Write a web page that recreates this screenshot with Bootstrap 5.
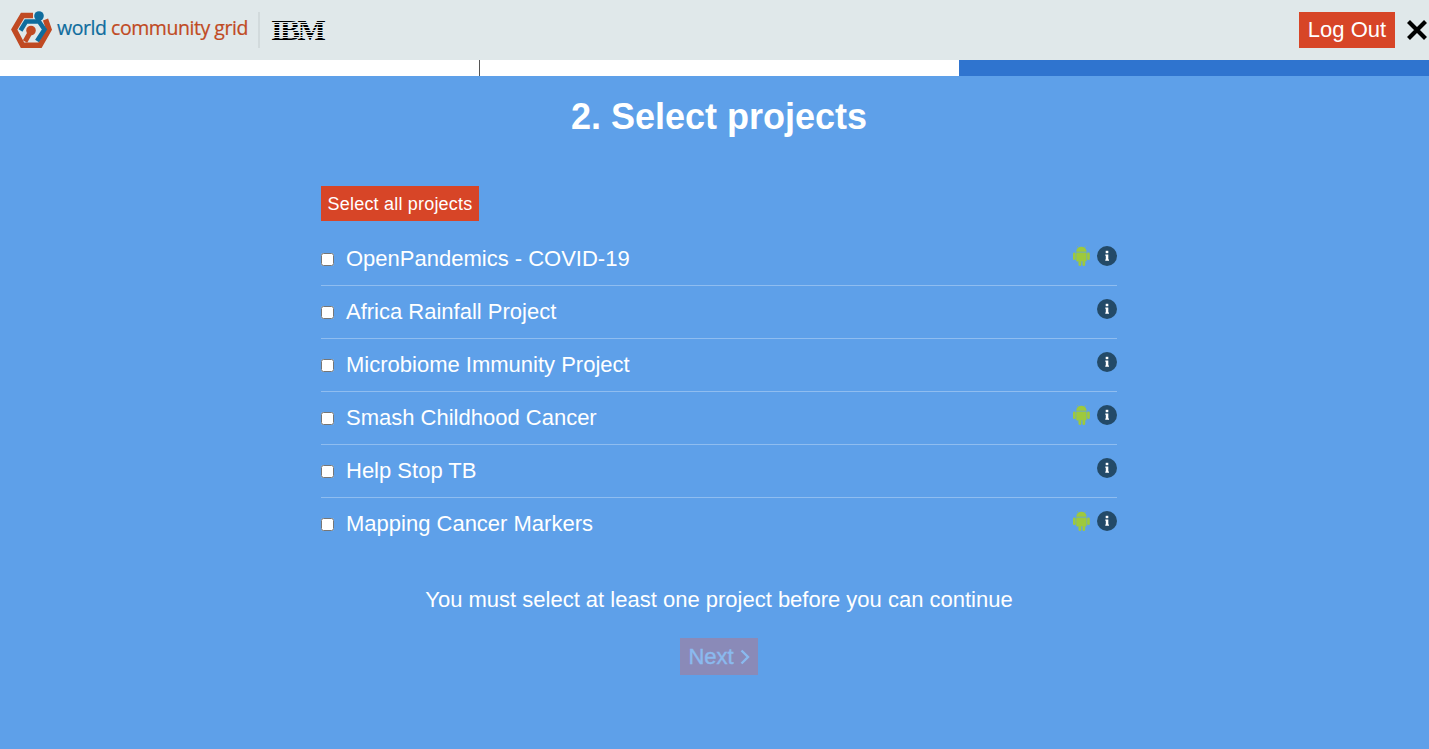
<!DOCTYPE html>
<html lang="en">
<head>
<meta charset="utf-8">
<title>Select projects</title>
<link href="https://cdn.jsdelivr.net/npm/bootstrap@5.3.0/dist/css/bootstrap.min.css" rel="stylesheet">
<style>
html,body{height:100%}
body{background:#5ea0e9;font-family:"Liberation Sans",Arial,sans-serif;color:#fff;overflow:hidden}
.top-strip{height:60px;background:#e0e8ea;padding:0 0 0 11px}
.brand-word{font-family:"Open Sans","Noto Sans",sans-serif;font-size:19.5px;line-height:1;margin:0 0 4px 4px;letter-spacing:-.45px;white-space:nowrap;color:#c04a23;-webkit-text-stroke:.2px}
.brand-word span{color:#0f6c9d}
.brand-rule{width:2px;height:36px;background:#d2dadc;margin:0 11px 0 10px}
.ibm-mark{position:relative;font-family:"Liberation Serif",serif;font-weight:700;font-size:30px;line-height:30px;height:30px;letter-spacing:-2.6px;color:#000;width:56px}
.ibm-mark::after{content:"";position:absolute;inset:0;background:repeating-linear-gradient(to bottom,transparent 0 1.6px,#e0e8ea 1.6px 2.6px)}
.logout-btn{background:#d74527;color:#fff;border:0;border-radius:0;font-size:22px;line-height:36px;height:36px;width:96px;padding:0}
.logout-btn:hover{background:#d74527;color:#fff}
.close-x{width:24px;height:60px;background:transparent;border:0;padding:0;margin-left:10px}
.steps{height:16px;background:#fff}
.steps .step-one{width:479.5px;border-right:1px solid #555}
.steps .step-two{width:479.5px}
.steps .step-three{flex:1;background:#2f74cf}
.main-col{padding-left:9px}
.page-title{font-size:36px;font-weight:700;line-height:41px;margin:20px 0 49px;text-align:center}
.inner{width:796px;margin:0 auto}
.all-btn{background:#d74527;color:#fff;border:0;border-radius:0;font-size:18px;letter-spacing:.2px;line-height:35px;height:35px;width:158px;padding:1px 0 0;display:block}
.all-btn:hover{background:#d74527;color:#fff}
.proj-list{margin-top:12px}
.proj-row{height:53px;border-bottom:1px solid #8fbdf0;padding-bottom:2px}
.proj-row:last-child{border-bottom-color:transparent}
.proj-row input{width:13px;height:13px;margin:2px 12px 0 0;flex:none}
.proj-row label{font-size:22px;line-height:25px}
.proj-icons{margin-top:-5px;gap:7px}
.note{font-size:22px;line-height:25px;margin:36px 0 26px;text-align:center}
.next-btn,.next-btn:disabled{display:block;margin:0 auto;width:78px;height:37px;background:#8a8ab8;color:#8abaef;border:0;border-radius:0;font-size:22px;line-height:37px;padding:0;opacity:1;-webkit-text-stroke:.4px #8abaef}
.chev-gap{margin-left:6px}
</style>
</head>
<body>
<header class="top-strip d-flex align-items-center">
  <svg width="42" height="40" viewBox="0 0 42 40" aria-hidden="true">
    <path d="M22 5.500H11.500L3.200 19.500L11.500 35.300H29L38 19.500L34.500 9.500" fill="none" stroke="#c04a23" stroke-width="5.500"/>
    <path d="M9.500 20.500L15 11.500H28L33.500 19.500L26 31" fill="none" stroke="#0f6c9d" stroke-width="4.500"/>
    <circle cx="28" cy="6" r="4.800" fill="#0f6c9d"/>
    <path d="M20 21L14 31.500" fill="none" stroke="#c04a23" stroke-width="5"/>
    <circle cx="20" cy="20.500" r="4.800" fill="#c04a23"/>
  </svg>
  <div class="brand-word"><span>world</span> community grid</div>
  <div class="brand-rule"></div>
  <div class="ibm-mark">IBM</div>
  <div class="ms-auto d-flex align-items-center">
    <button class="btn logout-btn">Log Out</button>
    <button class="close-x d-flex align-items-center justify-content-center" aria-label="Close">
      <svg width="22" height="22" viewBox="0 0 22 22" aria-hidden="true"><path d="M2.500 2.500L19.500 19.500M19.500 2.500L2.500 19.500" stroke="#000" stroke-width="4.200"/></svg>
    </button>
  </div>
</header>
<div class="steps d-flex">
  <div class="step-one"></div>
  <div class="step-two"></div>
  <div class="step-three"></div>
</div>
<main class="main-col">
  <h1 class="page-title">2. Select projects</h1>
  <div class="inner">
    <button class="btn all-btn">Select all projects</button>
    <div class="proj-list" id="projects"></div>
    <p class="note">You must select at least one project before you can continue</p>
    <button class="btn next-btn d-flex align-items-center justify-content-center" disabled>Next
      <svg class="chev-gap" width="10" height="16" viewBox="0 0 10 16" aria-hidden="true"><path d="M1.500 1.500L8 8L1.500 14.500" fill="none" stroke="#8abaef" stroke-width="2.400"/></svg>
    </button>
  </div>
</main>
<script>
var android='<svg width="17" height="20" viewBox="0 0 17 20" aria-hidden="true"><g fill="#9ec93c"><path d="M3.200 5.800A5.200 5 0 0 1 13.600 5.800Z"/><path d="M5 1.500L4.400 .3M11.800 1.500L12.400 .3" stroke="#9ec93c" stroke-width=".7"/><path d="M3.200 6.400H13.600V14.600A1 1 0 0 1 12.600 15.600H4.200A1 1 0 0 1 3.200 14.600Z"/><rect x="0" y="6.600" width="2.700" height="7.500" rx="1.300"/><rect x="14.100" y="6.600" width="2.700" height="7.500" rx="1.300"/><rect x="5.500" y="15" width="2.700" height="5" rx="1.300"/><rect x="9.500" y="15" width="2.700" height="5" rx="1.300"/></g></svg>';
var info='<svg width="20" height="20" viewBox="0 0 20 20" aria-hidden="true"><circle cx="10" cy="10" r="10" fill="#234a68"/><rect x="8.700" y="4.800" width="2.600" height="2.400" fill="#fff"/><path d="M8.300 8.400H11.300V13.400H12V14.800H8.300V13.400H8.800V9.800H8.300Z" fill="#fff"/></svg>';
var rows=[["OpenPandemics - COVID-19",1],["Africa Rainfall Project",0],["Microbiome Immunity Project",0],["Smash Childhood Cancer",1],["Help Stop TB",0],["Mapping Cancer Markers",1]];
document.getElementById('projects').innerHTML=rows.map(function(r,i){
  return '<div class="proj-row d-flex align-items-center"><input type="checkbox" id="p'+i+'"><label for="p'+i+'">'+r[0]+'</label><div class="proj-icons ms-auto d-flex align-items-center">'+(r[1]?android:'')+info+'</div></div>';
}).join('');
</script>
</body>
</html>
